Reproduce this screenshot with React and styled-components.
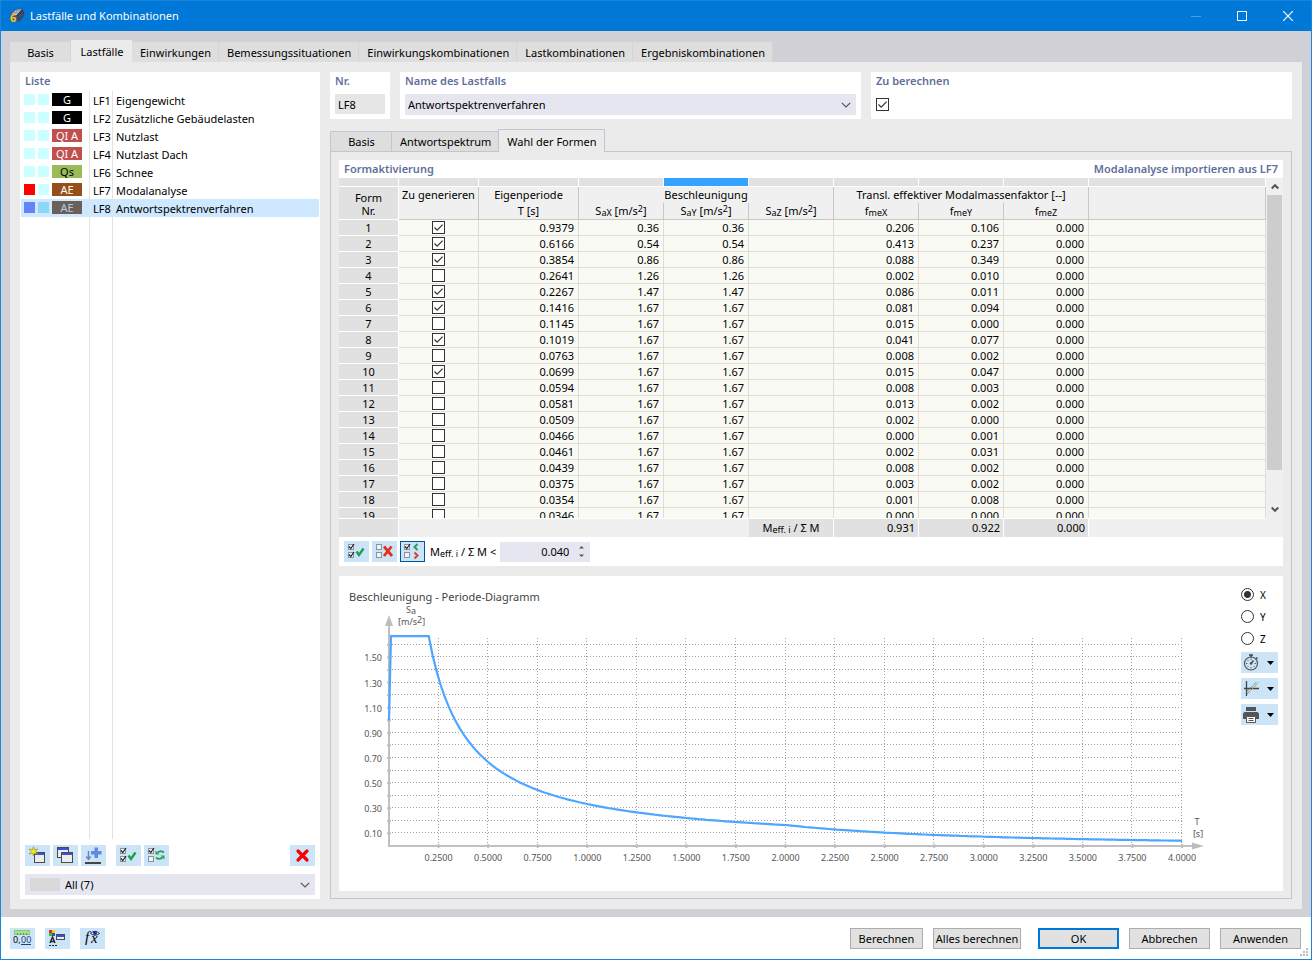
import React, { useState } from "react"
import styled, { createGlobalStyle, css } from "styled-components"

const colors = {
  title: "#0078d7",
  frame: "#d1d0d6",
  panel: "#ebebeb",
  tab: "#dedede",
  line: "#c5c5cf",
  heading: "#5f6f9a",
  tool: "#cce4f7",
  input: "#e6e6f1",
  select: "#cde8ff",
  curve: "#4da6ff",
}

const loadCases = [
  { id: "LF1", name: "Eigengewicht", tag: "G", bg: "#000000" },
  { id: "LF2", name: "Zusätzliche Gebäudelasten", tag: "G", bg: "#000000" },
  { id: "LF3", name: "Nutzlast", tag: "QI A", bg: "#c0504d" },
  { id: "LF4", name: "Nutzlast Dach", tag: "QI A", bg: "#c0504d" },
  { id: "LF6", name: "Schnee", tag: "Qs", bg: "#9bbb59", fg: "#000000" },
  { id: "LF7", name: "Modalanalyse", tag: "AE", bg: "#974f1a", mark: "#ff0000" },
  {
    id: "LF8",
    name: "Antwortspektrenverfahren",
    tag: "AE",
    bg: "#6b6057",
    fg: "#b4cbe6",
    mark: "#6384f5",
    mark2: "#8ed6f5",
  },
]

// active, period, SaX, SaY, fmeX, fmeY, fmeZ
const modes = [
  [true, "0.9379", "0.36", "0.36", "0.206", "0.106", "0.000"],
  [true, "0.6166", "0.54", "0.54", "0.413", "0.237", "0.000"],
  [true, "0.3854", "0.86", "0.86", "0.088", "0.349", "0.000"],
  [false, "0.2641", "1.26", "1.26", "0.002", "0.010", "0.000"],
  [true, "0.2267", "1.47", "1.47", "0.086", "0.011", "0.000"],
  [true, "0.1416", "1.67", "1.67", "0.081", "0.094", "0.000"],
  [false, "0.1145", "1.67", "1.67", "0.015", "0.000", "0.000"],
  [true, "0.1019", "1.67", "1.67", "0.041", "0.077", "0.000"],
  [false, "0.0763", "1.67", "1.67", "0.008", "0.002", "0.000"],
  [true, "0.0699", "1.67", "1.67", "0.015", "0.047", "0.000"],
  [false, "0.0594", "1.67", "1.67", "0.008", "0.003", "0.000"],
  [false, "0.0581", "1.67", "1.67", "0.013", "0.002", "0.000"],
  [false, "0.0509", "1.67", "1.67", "0.002", "0.000", "0.000"],
  [false, "0.0466", "1.67", "1.67", "0.000", "0.001", "0.000"],
  [false, "0.0461", "1.67", "1.67", "0.002", "0.031", "0.000"],
  [false, "0.0439", "1.67", "1.67", "0.008", "0.002", "0.000"],
  [false, "0.0375", "1.67", "1.67", "0.003", "0.002", "0.000"],
  [false, "0.0354", "1.67", "1.67", "0.001", "0.008", "0.000"],
  [false, "0.0346", "1.67", "1.67", "0.000", "0.000", "0.000"],
]

const GlobalStyle = createGlobalStyle`
  * {
    box-sizing: border-box;
  }

  body {
    margin: 0;
    background: #fff;
  }

  body, button, input, select {
    font-family: "Noto Sans", "Open Sans", sans-serif;
    font-size: 11px;
    line-height: 16px;
    color: #000;
  }
`

const Window = styled.div`
  display: flex;
  flex-direction: column;
  height: 100vh;
  min-height: 720px;
  border: 1px solid #1a85dd;
  background: ${colors.frame};
`

const TitleBar = styled.header`
  display: flex;
  align-items: center;
  height: 30px;
  flex: none;
  padding-left: 8px;
  background: ${colors.title};
  color: #fff;

  h1 {
    flex: 1;
    margin: 0 0 0 5px;
    font-size: 11px;
    font-weight: 400;
  }
`

const WindowButton = styled.button`
  display: flex;
  align-items: center;
  justify-content: center;
  width: 46px;
  height: 30px;
  padding: 0;
  border: 0;
  background: none;
`

const Tabs = styled.nav`
  display: flex;
  align-items: flex-end;
  flex: none;
  height: 31px;
  padding: 0 9px;
`

const Tab = styled.button`
  height: ${(p) => (p.$active ? 22 : 20)}px;
  min-width: 61px;
  padding: 1px 7px 0 ${(p) => (p.$active ? 9 : 8)}px;
  border: 0;
  border-right: 1px solid ${(p) => (p.$active ? colors.panel : "#d4d4d8")};
  background: ${(p) => (p.$active ? colors.panel : colors.tab)};
  white-space: nowrap;
`

const Main = styled.main`
  display: flex;
  flex: 1;
  gap: 10px;
  min-height: 0;
  margin: 0 9px 8px;
  padding: 10px;
  background: ${colors.panel};
`

const Sidebar = styled.aside`
  display: flex;
  flex-direction: column;
  flex: none;
  width: 300px;
  background: #fff;
`

const Heading = styled.h2`
  margin: 0;
  padding: 0 5px 1px;
  font-size: 11px;
  font-weight: 600;
  line-height: 18px;
  color: ${colors.heading};
`

const CaseList = styled.ul`
  display: flex;
  flex-direction: column;
  flex: 1;
  margin: 0;
  padding: 0 1px;
  list-style: none;
`

const CaseRow = styled.li`
  display: grid;
  grid-template-columns: 68px 23px 1fr;
  flex: ${(p) => (p.$fill ? "1" : "none")};
  min-height: 18px;
  line-height: 17px;
  background: ${(p) => (p.$selected ? colors.select : "#fff")};

  > * + * {
    padding: 1px 0 0 3px;
    border-left: 1px solid #e3e3e3;
  }
`

const Marks = styled.span`
  display: flex;
  gap: 3px;
  padding: 2px 0 0 3px;
`

const Mark = styled.i`
  width: 11px;
  height: 11px;
  margin-top: 1px;
  background: ${(p) => p.$color || "#ccffff"};
`

const Tag = styled.b`
  width: 30px;
  height: 13px;
  font-weight: 400;
  line-height: 14px;
  text-align: center;
  color: ${(p) => p.$fg || "#fff"};
  background: ${(p) => p.$bg};
`

const Toolbar = styled.div`
  display: flex;
  align-items: center;
  flex: none;
  gap: 3px;
  padding: ${(p) => (p.$tight ? "4px 5px" : "6px 5px 8px")};
`

const Spacer = styled.span`
  flex: ${(p) => (p.$size ? "none" : "1")};
  width: ${(p) => p.$size || 0}px;
`

const ToolButton = styled.button`
  display: flex;
  align-items: center;
  justify-content: center;
  width: 25px;
  height: 21px;
  padding: 0;
  border: 0;
  background: ${colors.tool};

  ${(p) =>
    p.$wide &&
    css`
      justify-content: flex-start;
      gap: 8px;
      width: 37px;
      padding-left: 2px;
    `}

  ${(p) =>
    p.$pressed &&
    css`
      outline: 1px solid #0055a0;
      outline-offset: -1px;
    `}
`

const SelectBox = styled.div`
  display: flex;
  align-items: center;
  height: 21px;
  margin: ${(p) => p.$margin || "0 5px"};
  padding: 0 5px 0 ${(p) => (p.$swatch ? 5 : 3)}px;
  background: ${colors.input};

  select {
    flex: 1;
    min-width: 0;
    height: 20px;
    margin-right: -10px;
    padding: 0 0 0 ${(p) => (p.$swatch ? 5 : 0)}px;
    border: 0;
    outline: 0;
    appearance: none;
    background: none;
  }

  svg {
    flex: none;
    pointer-events: none;
  }
`

const Swatch = styled.i`
  width: 30px;
  height: 13px;
  background: #d9d9d9;
`

const Content = styled.section`
  display: flex;
  flex-direction: column;
  flex: 1;
  min-width: 0;
`

const Fields = styled.div`
  display: flex;
  flex: none;
  gap: 10px;
  height: 47px;
`

const Field = styled.div`
  flex: ${(p) => p.$flex};
  min-width: 0;
  background: #fff;

  label {
    display: block;
    padding: 0 5px 4px;
    font-weight: 600;
    line-height: 18px;
    color: ${colors.heading};
  }

  input[type="text"] {
    display: block;
    width: 50px;
    height: 20px;
    margin-left: 5px;
    padding: 1px 3px 0;
    border: 0;
    background: #e6e6e6;
  }
`

const Check = styled.input`
  display: block;
  width: 13px;
  height: 13px;
  margin: ${(p) => p.$margin || "0 auto"};
  border: 1px solid #333;
  appearance: none;
  background: #fff;

  &:checked {
    background-image: url("data:image/svg+xml,%3Csvg xmlns='http://www.w3.org/2000/svg' viewBox='0 0 11 11'%3E%3Cpath d='M1.5 5.5 4.2 8.2 9.6 2.6' fill='none' stroke='%23333' stroke-width='1.2'/%3E%3C/svg%3E");
  }
`

const SubTabs = styled.nav`
  display: flex;
  align-items: flex-end;
  flex: none;
  height: 32px;
`

const SubTab = styled.button`
  z-index: ${(p) => (p.$active ? 1 : 0)};
  height: ${(p) => (p.$active ? 23 : 20)}px;
  min-width: 62px;
  margin-bottom: ${(p) => (p.$active ? -1 : 0)}px;
  padding: 1px 7px 0 8px;
  border: 1px solid ${colors.line};
  border-bottom: 0;
  background: ${(p) => (p.$active ? colors.panel : colors.tab)};
  white-space: nowrap;

  & + & {
    margin-left: ${(p) => (p.$active ? -1 : 0)}px;
  }
`

const SubPanel = styled.div`
  display: flex;
  flex-direction: column;
  flex: 1;
  gap: 10px;
  min-height: 0;
  padding: 8px 8px 7px;
  border: 1px solid ${colors.line};
`

const Card = styled.section`
  display: flex;
  flex-direction: column;
  flex: ${(p) => (p.$grow ? "1" : "none")};
  min-height: 0;
  background: #fff;
`

const CardHead = styled.div`
  display: flex;
  justify-content: space-between;
  flex: none;
  height: 18px;
`

const Scroller = styled.div`
  display: flex;
  flex: 1;
  min-height: 0;
  overflow: hidden;
  background: #f0f0f0;
`

const TableClip = styled.div`
  flex: 1;
  min-width: 0;
  overflow: hidden;
`

const Grid = styled.table`
  width: 100%;
  table-layout: fixed;
  border-collapse: separate;
  border-spacing: 0;

  th,
  td {
    padding: 0;
    font-weight: 400;
    white-space: nowrap;
  }
`

const Table = styled(Grid)`
  th,
  td {
    height: 16px;
    line-height: 15px;
  }

  thead th {
    padding-top: 1px;
    border-right: 1px solid #c8c8c8;
    line-height: 14px;
    vertical-align: top;
    background: #f0f0f0;
  }

  thead tr:last-child th {
    height: 17px;
  }

  thead tr:last-child th,
  thead th[rowspan] {
    border-bottom: 1px solid #c8c8c8;
  }

  thead th.form,
  tbody th {
    border-right: 1px solid #fff;
    border-bottom: 1px solid #fff;
    background: #e1e1e1;
  }

  thead th.form {
    line-height: 13px;
    vertical-align: middle;
  }

  tbody td {
    padding-right: 4px;
    border-right: 1px solid #deded6;
    border-bottom: 1px solid #deded6;
    text-align: right;
    background: #f9faf4;
  }

  tbody td.check {
    padding: 0;
  }
`

const Strip = styled.tr`
  && th {
    height: 9px;
    padding: 0;
    border-right: 1px solid #fff;
    border-bottom: 1px solid #fff;
    line-height: 8px;
    background: #e1e1e1;
  }

  && th.current {
    background: #33a3ff;
  }
`

const TotalsRow = styled.div`
  flex: none;
  height: 19px;
  padding-right: 17px;
  background: #f0f0f0;
`

const Totals = styled(Grid)`
  td {
    height: 19px;
    padding: 0 3px 1px 0;
    border-top: 1px solid #fff;
    border-right: 1px solid #fff;
    line-height: 16px;
    text-align: right;
    background: #e1e1e1;
  }

  td.blank {
    border-right: 0;
    background: #f0f0f0;
  }

  td.label {
    padding: 0 0 1px;
    text-align: center;
  }
`

const ScrollBar = styled.div`
  display: flex;
  flex-direction: column;
  width: 17px;
  padding: 0 1px;
  background: #f0f0f0;

  button {
    display: flex;
    align-items: center;
    justify-content: center;
    height: 17px;
    padding: 0;
    border: 0;
    background: none;
  }

  i {
    flex: 275;
    background: #cdcdcd;
  }

  span {
    flex: 31;
  }
`

const Sub = styled.sub`
  font-size: 9px;
  line-height: 1;
  vertical-align: -1px;
`

const Sup = styled.sup`
  font-size: 9px;
  line-height: 1;
  vertical-align: 3px;
`

const Limit = styled.label`
  display: flex;
  align-items: center;
  gap: 4px;
  margin-left: 2px;
`

const Spin = styled.span`
  display: flex;
  align-items: center;
  width: 90px;
  height: 20px;
  padding-right: 6px;
  background: ${colors.input};

  input {
    flex: 1;
    min-width: 0;
    padding: 1px 10px 0 0;
    border: 0;
    text-align: right;
    background: none;
  }
`

const ChartCard = styled(Card)`
  display: grid;
  grid-template-columns: 1fr 48px;
  height: 315px;
  color: #444;
`

const ChartTitle = styled.h3`
  margin: 12px 0 0 10px;
  font-size: 11px;
  font-weight: 400;
  line-height: 18px;
`

const Plot = styled.svg`
  display: block;
  width: 100%;
  height: 280px;
  margin-top: -6px;

  text {
    font-size: 9px;
    fill: #555;
  }
`

const Options = styled.div`
  display: flex;
  flex-direction: column;
  gap: 5px;
  padding: 10px 0 0 6px;

  label {
    display: flex;
    align-items: center;
    gap: 6px;
    height: 17px;
    font-size: 10px;
    color: #000;
  }

  input {
    width: 13px;
    height: 13px;
    margin: 0;
    border: 1px solid #333;
    border-radius: 50%;
    appearance: none;
    background: #fff;
  }

  input:checked {
    background: radial-gradient(#333 0 3px, #fff 4px);
  }
`

const Footer = styled.footer`
  position: relative;
  display: flex;
  align-items: center;
  gap: 10px;
  flex: none;
  height: 42px;
  padding: 0 10px 0 9px;
  background: #fff;
`

// resize handle in the window corner, lies over the footer
const Grip = styled.svg`
  position: absolute;
  right: 2px;
  bottom: 2px;
`

const PushButton = styled.button`
  width: ${(p) => p.$width || 81}px;
  height: 21px;
  margin-left: ${(p) => (p.$default ? 7 : 0)}px;
  padding: 0;
  border: ${(p) => (p.$default ? `2px solid ${colors.title}` : "1px solid #adadad")};
  line-height: 17px;
  white-space: nowrap;
  background: #e1e1e1;
`

const Chevron = () => (
  <svg width="10" height="6" viewBox="0 0 10 6">
    <path d="M0.8 0.8 5 5 9.2 0.8" fill="none" stroke="#555" strokeWidth="1.2" />
  </svg>
)

const Caret = () => (
  <svg width="7" height="4" viewBox="0 0 7 4">
    <path d="M0 0h7L3.5 4z" fill="#000" />
  </svg>
)

const Arrow = ({ down }) => (
  <svg width="8" height="7" viewBox="0 0 8 7">
    <path
      d={down ? "M0.7 1.5 4 4.8 7.3 1.5" : "M0.7 5.5 4 2.2 7.3 5.5"}
      fill="none"
      stroke="#555"
      strokeWidth="2"
    />
  </svg>
)

const AppIcon = () => (
  <svg width="16" height="16" viewBox="0 0 16 16">
    <path d="M1 6 6.5 1 13 0.5 15.5 4 15 8l-5 6-5-1z" fill="#44576e" />
    <path d="M2.5 6 7 1.8 12.5 1.3 7.5 7z" fill="#b4c3d2" />
    <path d="M8 7.5 13.2 1.8 15 4.5 14.5 8 10 13z" fill="#26364c" />
    <path d="M4.5 4.3 9.5 5M6.5 2.4l5 .5M5 6.5l4.5-5M9 9l5-5M9.8 11l4.7-5" stroke="#7489a0" strokeWidth="0.7" />
    <text x="1" y="14" fontSize="11" fontWeight="700" fill="#ffc21c">6</text>
  </svg>
)

const MiniWindow = ({ x, y, w = 11, h = 9 }) => (
  <g transform={`translate(${x} ${y})`}>
    <rect x="0.5" y="0.5" width={w} height={h} fill="#ececec" stroke="#4a4a4a" />
    <rect x="1" y="1" width={w - 1} height="2" fill="#3c50e0" />
  </g>
)

// odd canvas so that icon pixels line up with the 25x21 buttons
const Icon = ({ children }) => (
  <svg width="19" height="19" viewBox="0 0 19 19">
    {children}
  </svg>
)

const NewIcon = () => (
  <Icon>
    <MiniWindow x={6} y={6} w={10} h={10} />
    <path d="M5.5 0.8 6.5 3.8 9.8 3 7.7 5.5 9.8 8 6.5 7.2 5.5 10 4.5 7.2 1 8 3.3 5.5 1 3 4.4 3.8z" fill="#f8e71c" stroke="#8d8420" strokeWidth="0.6" />
  </Icon>
)

const CopyIcon = () => (
  <Icon>
    <MiniWindow x={1} y={1} w={11} h={10} />
    <MiniWindow x={5} y={6} w={11} h={10} />
  </Icon>
)

const AddIcon = () => (
  <Icon>
    <path d="M4.5 5v8M2.3 10.5l2.2 2.8 2.2-2.8" fill="none" stroke="#5f8bc4" strokeWidth="1.5" />
    <path d="M1 17h16" stroke="#444" strokeWidth="2" />
    <path d="M10.500 1.500h3.500v3.500h3.500v3.500H14V12h-3.500V8.500H7V5h3.500z" fill="#6288e2" />
  </Icon>
)

const Box = ({ x, y, checked }) => (
  <g transform={`translate(${x} ${y})`}>
    <rect x="0.5" y="0.5" width="5" height="5" fill="#eef4fa" stroke="#8b939c" />
    {checked && <path d="M1 2.5 2.8 4.6 6 0" fill="none" stroke="#222" strokeWidth="1.2" />}
  </g>
)

const AllIcon = () => (
  <Icon>
    <Box x={1} y={2} checked />
    <Box x={1} y={10} checked />
    <path d="M9.5 9.5 12 13 16.5 6.5" fill="none" stroke="#18a34a" strokeWidth="2.4" />
  </Icon>
)

const NoneIcon = () => (
  <Icon>
    <Box x={1} y={2} />
    <Box x={1} y={10} />
    <path d="m9 4.5 8 9.5M16.5 4.5 9 14" stroke="#e0301e" strokeWidth="2.8" />
  </Icon>
)

const LimitIcon = () => (
  <Icon>
    <Box x={1} y={2} checked />
    <Box x={1} y={10} />
    <path d="M14.5 2 11.5 5l3 3" fill="none" stroke="#2d9d63" strokeWidth="2" />
    <path d="m11.5 10.5 3 3-3 3" fill="none" stroke="#d6452c" strokeWidth="2" />
  </Icon>
)

const SwapIcon = () => (
  <Icon>
    <Box x={1} y={2} checked />
    <Box x={1} y={10} />
    <path d="M17 6.500C15 4.800 12.500 5 10.500 6.500M9 11.500c2 1.800 4.500 1.500 6.500 0" fill="none" stroke="#2f9e5b" strokeWidth="1.8" />
    <path d="M8.500 4.500v4H12.500zM17.500 13.500V9.500H13.500z" fill="#2f9e5b" />
  </Icon>
)

const DeleteIcon = () => (
  <svg width="15" height="15" viewBox="0 0 15 15">
    <path d="m3 3 9 9M12 3l-9 9" stroke="#f80000" strokeWidth="3.2" strokeLinecap="round" />
  </svg>
)

const UnitsIcon = () => (
  <Icon>
    <rect x="1.5" y="1.5" width="15" height="4" fill="#a6e08e" stroke="#8cc878" />
    <path d="M4.5 4v2M7.5 4v2M10.5 4v2M13.5 4v2" stroke="#5c9a4a" />
    <text x="0" y="14" fontSize="9">0,</text>
    <text x="8" y="14" fontSize="9" fill="#1f3d7a">00</text>
    <path d="M8 15.5h10" stroke="#1f3d7a" />
  </Icon>
)

const DisplayIcon = () => (
  <Icon>
    <path d="M1 1h3v3H1z" fill="#e22" />
    <path d="M4 1h3v3H4z" fill="#fc0" />
    <path d="M1 4h3v3H1z" fill="#2c2" />
    <path d="M4 4h3v3H4z" fill="#34e" />
    <path d="m2 14 2.5-6L7 14M3 12.5h3" fill="none" stroke="#222" strokeWidth="1.4" />
    <path d="M1 16.5h8" stroke="#222" strokeDasharray="2 1" />
    <MiniWindow x={8} y={5} w={8} h={5} />
  </Icon>
)

const FormulaIcon = () => (
  <Icon>
    <text x="2" y="13" fontSize="15" fontStyle="italic" fontFamily="Liberation Serif, serif">f</text>
    <text x="8" y="14" fontSize="15" fontStyle="italic" fontFamily="Liberation Serif, serif">x</text>
    <path d="M7.5 4.5Q12 0 16.5 4.5 12 8 7.5 4.5z" fill="#e6e6f6" stroke="#2a2a60" />
    <circle cx="12" cy="4" r="2" fill="#2b2b8c" />
  </Icon>
)

const TimerIcon = () => (
  <svg width="16" height="18" viewBox="0 0 16 18">
    <circle cx="8" cy="9.5" r="6.5" fill="none" stroke="#555" strokeWidth="1.2" />
    <path d="M6 1h4M8 0.5v3M13 3.500l1.500 1.500M8 9.500l2.500-3" stroke="#444" strokeWidth="1.4" />
    <path d="M8 4.500v1.500M8 13v1.500M3 9.500h1.500M11.500 9.500h1.500M4.500 6l1 1M4.500 13l1-1M11.500 13l-1-1" stroke="#666" />
    <circle cx="8" cy="9.5" r="1.2" fill="#444" />
  </svg>
)

const AxesIcon = () => (
  <svg width="16" height="17" viewBox="0 0 16 17">
    <path d="M3.5 1v15M1 8.5h15" stroke="#444" strokeWidth="1.3" />
    <path d="M3.5 12 14 1.5" stroke="#3fa66a" strokeDasharray="4 1" />
    <path d="m4 14 11.5-11.5" stroke="#d9776a" strokeDasharray="4 1" />
  </svg>
)

const PrintIcon = () => (
  <svg width="16" height="17" viewBox="0 0 16 17">
    <path d="M3 1h10v4H3z" fill="#555" />
    <path d="M1.5 6h13L16 7.500V13h-3v-2.500H3V13H0V7.500z" fill="#555" />
    <path d="M3.5 10.5h9v6h-9z" fill="#fff" stroke="#555" />
    <path d="M5.5 12.5h5M5.5 14.5h5" stroke="#555" />
  </svg>
)

const Columns = () => (
  <colgroup>
    {[60, 80, 100, 85, 85, 85, 85, 85, 85].map((w, i) => (
      <col key={i} width={w} />
    ))}
    <col />
  </colgroup>
)

const Acceleration = ({ axis }) => (
  <>
    S<Sub>a{axis}</Sub> [m/s<Sup>2</Sup>]
  </>
)

const MassRatio = () => (
  <span>
    M<Sub>eff. i</Sub> / Σ M
  </span>
)

const ModeTable = () => {
  const [active, setActive] = useState(modes.map((m) => m[0]))
  const toggle = (i) => setActive(active.map((a, n) => (n === i ? !a : a)))

  return (
    <Table>
      <Columns />
      <thead>
        <Strip>
          {Array.from({ length: 10 }, (_, i) => (
            <th key={i} className={i === 4 ? "current" : ""} />
          ))}
        </Strip>
        <tr>
          <th rowSpan="2" className="form">
            Form
            <br />
            Nr.
          </th>
          <th rowSpan="2">Zu generieren</th>
          <th>Eigenperiode</th>
          <th colSpan="3">Beschleunigung</th>
          <th colSpan="3">Transl. effektiver Modalmassenfaktor [--]</th>
          <th rowSpan="2" />
        </tr>
        <tr>
          <th>T [s]</th>
          {["X", "Y", "Z"].map((a) => (
            <th key={a}>
              <Acceleration axis={a} />
            </th>
          ))}
          {["X", "Y", "Z"].map((a) => (
            <th key={a}>
              f<Sub>me{a}</Sub>
            </th>
          ))}
        </tr>
      </thead>
      <tbody>
        {modes.map(([, period, sx, sy, fx, fy, fz], i) => (
          <tr key={i}>
            <th>{i + 1}</th>
            <td className="check">
              <Check
                type="checkbox"
                aria-label={`Form ${i + 1}`}
                checked={active[i]}
                onChange={() => toggle(i)}
              />
            </td>
            <td>{period}</td>
            <td>{sx}</td>
            <td>{sy}</td>
            <td />
            <td>{fx}</td>
            <td>{fy}</td>
            <td>{fz}</td>
            <td />
          </tr>
        ))}
      </tbody>
    </Table>
  )
}

// plot area: T from 0 to 4 s, Sa from 0 to 1.67 m/s²
const px = (t) => 50 + t * 198.25
const py = (s) => 246 - s * 125.7

const spectrum = (t) => {
  if (t <= 0.2) return 1.67
  if (t <= 2) return 0.334 / t
  return 0.668 / (t * t)
}

const curve = () => {
  const points = [[0, 1], [0.01, 1.67]]
  for (let t = 0.2; t <= 4.001; t += 0.02) points.push([t, spectrum(t)])
  return points.map(([t, s]) => `${px(t).toFixed(1)},${py(s).toFixed(1)}`).join(" ")
}

const Diagram = () => {
  const xs = Array.from({ length: 16 }, (_, i) => (i + 1) / 4)
  const ys = Array.from({ length: 16 }, (_, i) => (i + 1) / 10)

  return (
    <Plot viewBox="0 0 896 280" preserveAspectRatio="xMinYMin meet">
      <g stroke="#a0a0a0" strokeDasharray="1 2" shapeRendering="crispEdges">
        {xs.map((t) => (
          <line key={t} x1={Math.round(px(t)) - 0.5} x2={Math.round(px(t)) - 0.5} y1="38" y2="246" />
        ))}
        {ys.map((s) => (
          <line key={s} x1="50" x2="843" y1={Math.round(py(s)) - 0.5} y2={Math.round(py(s)) - 0.5} />
        ))}
      </g>
      <g stroke="#c0c0c0" strokeWidth="2">
        <path d="M50 24V246H855" fill="none" />
        {xs.map((t) => (
          <line key={t} x1={px(t)} x2={px(t)} y1="244" y2="248" />
        ))}
        {ys.map((s) => (
          <line key={s} x1="48" x2="52" y1={py(s)} y2={py(s)} />
        ))}
      </g>
      <path d="M46 26 50 15l4 11zM853 242.5 865 246l-12 3.5z" fill="#bdbdbd" />
      <polyline points={curve()} fill="none" stroke={colors.curve} strokeWidth="2.2" />
      {xs.map((t) => (
        <text key={t} x={px(t)} y="261" textAnchor="middle">
          {t.toFixed(4)}
        </text>
      ))}
      {ys
        .filter((_, i) => i % 2 === 0)
        .map((s) => (
          <text key={s} x="43" y={py(s) + 4} textAnchor="end">
            {s.toFixed(2)}
          </text>
        ))}
      <text x="67" y="13">
        S<tspan dy="1">a</tspan>
      </text>
      <text x="59" y="25">
        [m/s<tspan dy="-2">2</tspan>
        <tspan dy="2">]</tspan>
      </text>
      <text x="858" y="225" textAnchor="middle">T</text>
      <text x="859" y="237" textAnchor="middle">[s]</text>
    </Plot>
  )
}

const App = () => {
  const [selected, setSelected] = useState("LF8")
  const [axis, setAxis] = useState("X")

  return (
    <Window>
      <GlobalStyle />
      <TitleBar>
        <AppIcon />
        <h1>Lastfälle und Kombinationen</h1>
        <WindowButton aria-label="Minimieren" disabled>
          <svg width="10" height="10"><path d="M0 5.5h10" stroke="#4aa0e4" /></svg>
        </WindowButton>
        <WindowButton aria-label="Maximieren">
          <svg width="10" height="10"><path d="M0.5 0.5h9v9h-9z" fill="none" stroke="#fff" /></svg>
        </WindowButton>
        <WindowButton aria-label="Schließen">
          <svg width="10" height="10"><path d="m0 0 10 10M10 0 0 10" stroke="#fff" strokeWidth="1.1" /></svg>
        </WindowButton>
      </TitleBar>

      <Tabs>
        <Tab>Basis</Tab>
        <Tab $active>Lastfälle</Tab>
        <Tab>Einwirkungen</Tab>
        <Tab>Bemessungssituationen</Tab>
        <Tab>Einwirkungskombinationen</Tab>
        <Tab>Lastkombinationen</Tab>
        <Tab>Ergebniskombinationen</Tab>
      </Tabs>

      <Main>
        <Sidebar>
          <Heading>Liste</Heading>
          <CaseList>
            {loadCases.map((c) => (
              <CaseRow key={c.id} $selected={selected === c.id} onClick={() => setSelected(c.id)}>
                <Marks>
                  <Mark $color={c.mark} />
                  <Mark $color={c.mark2} />
                  <Tag $bg={c.bg} $fg={c.fg}>{c.tag}</Tag>
                </Marks>
                <span>{c.id}</span>
                <span>{c.name}</span>
              </CaseRow>
            ))}
            <CaseRow $fill>
              <span />
              <span />
              <span />
            </CaseRow>
          </CaseList>
          <Toolbar>
            <ToolButton aria-label="Neu"><NewIcon /></ToolButton>
            <ToolButton aria-label="Kopieren"><CopyIcon /></ToolButton>
            <ToolButton aria-label="Hinzufügen"><AddIcon /></ToolButton>
            <Spacer $size={4} />
            <ToolButton aria-label="Alle auswählen"><AllIcon /></ToolButton>
            <ToolButton aria-label="Auswahl umkehren"><SwapIcon /></ToolButton>
            <Spacer />
            <ToolButton aria-label="Löschen"><DeleteIcon /></ToolButton>
          </Toolbar>
          <SelectBox $swatch $margin="0 5px 4px">
            <Swatch />
            <select aria-label="Filter">
              <option>All (7)</option>
            </select>
            <Chevron />
          </SelectBox>
        </Sidebar>

        <Content>
          <Fields>
            <Field $flex="0 0 60px">
              <label htmlFor="nr">Nr.</label>
              <input id="nr" type="text" value="LF8" readOnly />
            </Field>
            <Field $flex="461 1 0">
              <label htmlFor="name">Name des Lastfalls</label>
              <SelectBox>
                <select id="name">
                  <option>Antwortspektrenverfahren</option>
                </select>
                <Chevron />
              </SelectBox>
            </Field>
            <Field $flex="421 1 0">
              <label htmlFor="calc">Zu berechnen</label>
              <Check id="calc" type="checkbox" defaultChecked $margin="4px 0 0 5px" />
            </Field>
          </Fields>

          <SubTabs>
            <SubTab>Basis</SubTab>
            <SubTab>Antwortspektrum</SubTab>
            <SubTab $active>Wahl der Formen</SubTab>
          </SubTabs>

          <SubPanel>
            <Card $grow>
              <CardHead>
                <Heading>Formaktivierung</Heading>
                <Heading>Modalanalyse importieren aus LF7</Heading>
              </CardHead>
              <Scroller>
                <TableClip>
                  <ModeTable />
                </TableClip>
                <ScrollBar>
                  <button aria-label="Nach oben"><Arrow /></button>
                  <i />
                  <span />
                  <button aria-label="Nach unten"><Arrow down /></button>
                </ScrollBar>
              </Scroller>
              <TotalsRow>
                <Totals>
                  <Columns />
                  <tbody>
                    <tr>
                      <td />
                      <td className="blank" colSpan="4" />
                      <td className="label"><MassRatio /></td>
                      <td>0.931</td>
                      <td>0.922</td>
                      <td>0.000</td>
                      <td className="blank" />
                    </tr>
                  </tbody>
                </Totals>
              </TotalsRow>
              <Toolbar $tight>
                <ToolButton aria-label="Alle aktivieren"><AllIcon /></ToolButton>
                <ToolButton aria-label="Alle deaktivieren"><NoneIcon /></ToolButton>
                <ToolButton $pressed aria-label="Nach Grenzwert"><LimitIcon /></ToolButton>
                <Limit>
                  <span><MassRatio /> &lt;</span>
                  <Spin>
                    <input defaultValue="0.040" />
                    <svg width="5" height="13" viewBox="0 0 5 13">
                      <path d="M0 3.5 2.5 1 5 3.5zM0 9.5h5L2.5 12z" fill="#555" />
                    </svg>
                  </Spin>
                </Limit>
              </Toolbar>
            </Card>

            <ChartCard>
              <div>
                <ChartTitle>Beschleunigung - Periode-Diagramm</ChartTitle>
                <Diagram />
              </div>
              <Options>
                {["X", "Y", "Z"].map((a) => (
                  <label key={a}>
                    <input
                      type="radio"
                      name="axis"
                      checked={axis === a}
                      onChange={() => setAxis(a)}
                    />
                    {a}
                  </label>
                ))}
                <ToolButton $wide aria-label="Periode"><TimerIcon /><Caret /></ToolButton>
                <ToolButton $wide aria-label="Achsen"><AxesIcon /><Caret /></ToolButton>
                <ToolButton $wide aria-label="Drucken"><PrintIcon /><Caret /></ToolButton>
              </Options>
            </ChartCard>
          </SubPanel>
        </Content>
      </Main>

      <Footer>
        <ToolButton aria-label="Einheiten"><UnitsIcon /></ToolButton>
        <ToolButton aria-label="Anzeige"><DisplayIcon /></ToolButton>
        <ToolButton aria-label="Formel"><FormulaIcon /></ToolButton>
        <Spacer />
        <PushButton $width={73}>Berechnen</PushButton>
        <PushButton $width={88}>Alles berechnen</PushButton>
        <PushButton $default>OK</PushButton>
        <PushButton>Abbrechen</PushButton>
        <PushButton>Anwenden</PushButton>
        <Grip width="9" height="9">
          <path d="M6 0h2v2H6zM3 3h2v2H3zM6 3h2v2H6zM0 6h2v2H0zM3 6h2v2H3zM6 6h2v2H6z" fill="#bfbfbf" />
        </Grip>
      </Footer>
    </Window>
  )
}

export default App
